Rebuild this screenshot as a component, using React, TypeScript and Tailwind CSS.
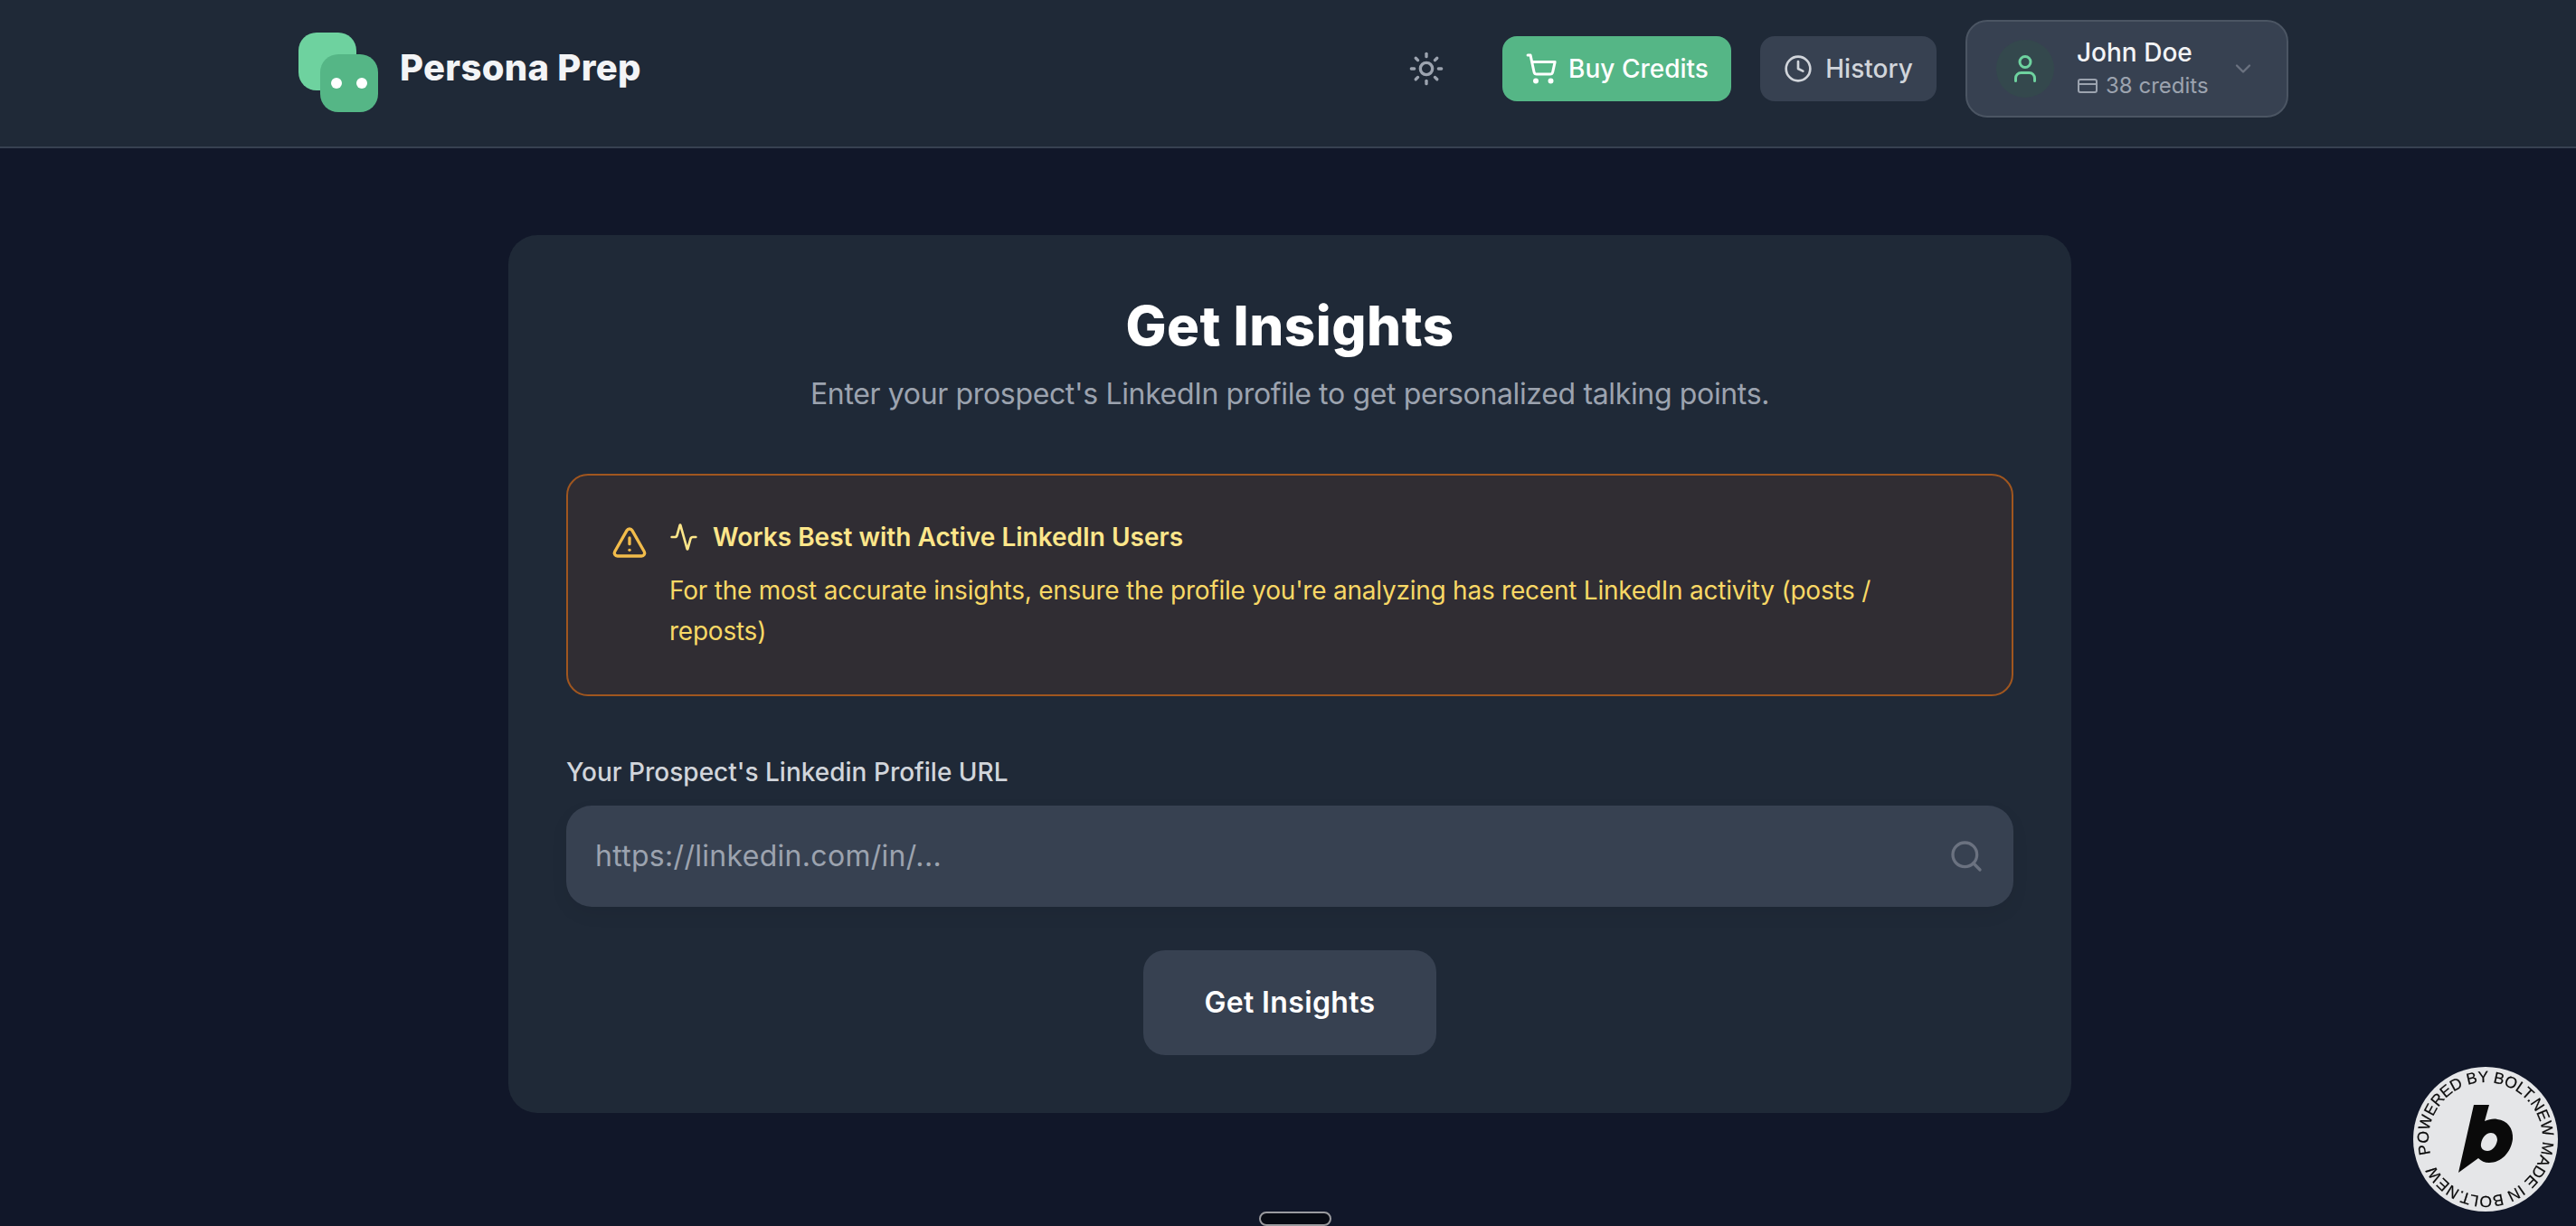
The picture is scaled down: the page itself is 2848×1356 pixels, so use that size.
import { Sun, ShoppingCart, Clock, User, CreditCard, ChevronDown, TriangleAlert, Activity, Search } from "lucide-react";

function Logo() {
  return (
    <div className="relative w-[88px] h-[88px] shrink-0">
      <div className="absolute left-0 top-0 w-16 h-16 rounded-[20px] bg-[#6ed29f]" />
      <div className="absolute left-6 top-6 w-16 h-16 rounded-[20px] bg-[#55b686] flex items-center justify-center gap-4">
        <span className="w-3 h-3 rounded-full bg-white" />
        <span className="w-3 h-3 rounded-full bg-white" />
      </div>
    </div>
  );
}

function BoltBadge() {
  return (
    <div className="fixed left-[2668px] top-[1180px] w-40 h-40 rounded-full bg-[#e5e6e8]">
      <svg viewBox="0 0 160 160" className="w-40 h-40">
        <defs>
          <path id="badge-ring" d="M80 80 m-63 0 a63 63 0 1 1 126 0 a63 63 0 1 1 -126 0" />
        </defs>
        <g transform="rotate(-15 80 80)">
          <text fontSize="17.5" fontFamily="'Liberation Sans', sans-serif" fill="#0a0a0a" stroke="#0a0a0a" strokeWidth="0.2">
            <textPath href="#badge-ring">POWERED BY BOLT.NEW MADE IN BOLT.NEW</textPath>
          </text>
        </g>
        <path
          d="M67 42 L84 42 L79 60 C84 58 89 57 93 58 C104 59 111 68 110 80 C108 95 97 106 84 106 C79 106 75 104 72 101 L50 117 Z M86 73 C80 73 76 79 75 85 C74 90 78 93 82 93 C88 93 92 87 93 81 C93 76 90 73 86 73 Z"
          fill="#0a0a0a"
          fillRule="evenodd"
        />
      </svg>
    </div>
  );
}

export default function App() {
  return (
    <div className="relative h-[1356px] overflow-hidden bg-[#111729] font-['Inter','Liberation_Sans',sans-serif]">
      <header className="h-[164px] border-b-2 border-[#374151] bg-[#1f2937] flex items-center pl-[330px] pr-[318px] pb-[11px] justify-between">
        <div className="flex items-center gap-[24px]">
          <div className="mt-[9px]"><Logo /></div>
          <span className="text-[40px] font-extrabold tracking-[0.3px] text-[#f3f4f6] leading-none mt-[-2px]">Persona Prep</span>
        </div>
        <div className="flex items-center">
          <Sun className="w-10 h-10 text-[#9ca3af] mr-[64px]" strokeWidth={2} />
          <button className="h-[72px] w-[253px] rounded-[16px] bg-[#55b686] flex items-center justify-center gap-[12px] text-white text-[28px] font-medium">
            <ShoppingCart className="w-9 h-9" strokeWidth={2} />
            <span>Buy Credits</span>
          </button>
          <button className="ml-8 h-[72px] w-[195px] rounded-[16px] bg-[#374151] flex items-center justify-center gap-[14px] text-[#d1d5db] text-[28px] font-medium">
            <Clock className="w-8 h-8" strokeWidth={2} />
            <span>History</span>
          </button>
          <div className="ml-8 h-[108px] w-[357px] rounded-[24px] border-2 border-[#4b5563] bg-[#374151] flex items-center pl-[32px] pr-[34px]">
            <div className="w-16 h-16 rounded-full bg-[#34484d] flex items-center justify-center shrink-0">
              <User className="w-9 h-9 text-[#6ed29f]" strokeWidth={2} />
            </div>
            <div className="ml-[25px] flex-1">
              <div className="text-[28px] leading-[36px] font-medium text-[#f3f4f6]">John Doe</div>
              <div className="mt-[3px] flex items-center gap-2 text-[24px] leading-[32px] text-[#9ca3af]">
                <CreditCard className="w-6 h-6" strokeWidth={2} />
                <span>38 credits</span>
              </div>
            </div>
            <ChevronDown className="w-7 h-7 text-[#6b7280]" strokeWidth={2} />
          </div>
        </div>
      </header>

      <main className="pt-24 pl-[562px]">
        <section className="w-[1728px] h-[971px] rounded-[32px] bg-[#1f2937] px-16 pt-[64px]">
          <h1 className="text-center text-[60px] leading-[72px] font-extrabold tracking-[0.5px] text-white">Get Insights</h1>
          <p className="mt-[20px] text-center text-[32px] leading-[40px] tracking-[-0.35px] text-[#9ca3af]">Enter your prospect's LinkedIn profile to get personalized talking points.</p>

          <div className="mt-[68px] h-[246px] rounded-[24px] border-2 border-[#a0561f] bg-[#302d33] flex pl-[48px] pr-[120px] pt-[48px]">
            <TriangleAlert className="w-10 h-10 mt-[6px] text-[#f2bc4b] shrink-0" strokeWidth={2} />
            <div className="ml-6">
              <div className="flex items-center gap-4 h-10">
                <Activity className="w-8 h-8 text-[#fde68a]" strokeWidth={2} />
                <span className="text-[28px] font-semibold text-[#fde68a]">Works Best with Active LinkedIn Users</span>
              </div>
              <p className="mt-[17px] text-[28px] leading-[45px] tracking-[-0.23px] text-[#f8d865]">For the most accurate insights, ensure the profile you're analyzing has recent LinkedIn activity (posts / reposts)</p>
            </div>
          </div>

          <label className="block mt-[64px] text-[28px] leading-[40px] font-medium text-[#d1d5db]">Your Prospect's Linkedin Profile URL</label>
          <div className="mt-[17px] h-[112px] rounded-[28px] bg-[#374151] shadow-[0_8px_20px_rgba(0,0,0,0.06)] flex items-center pl-8 pr-8">
            <span className="flex-1 text-[32px] tracking-[0.3px] text-[#9ca3af]">https://linkedin.com/in/...</span>
            <Search className="w-10 h-10 text-[#6b7280]" strokeWidth={2} />
          </div>
          <div className="mt-[48px] flex justify-center">
            <button className="w-[324px] h-[116px] rounded-[24px] bg-[#374151] text-white text-[32px] font-semibold tracking-[0.35px]">Get Insights</button>
          </div>
        </section>
      </main>

      <BoltBadge />
      <div className="fixed left-[1392px] top-[1340px] w-20 h-4 rounded-lg border-2 border-[#9a9a9e] bg-[#080b14]" />
    </div>
  );
}
